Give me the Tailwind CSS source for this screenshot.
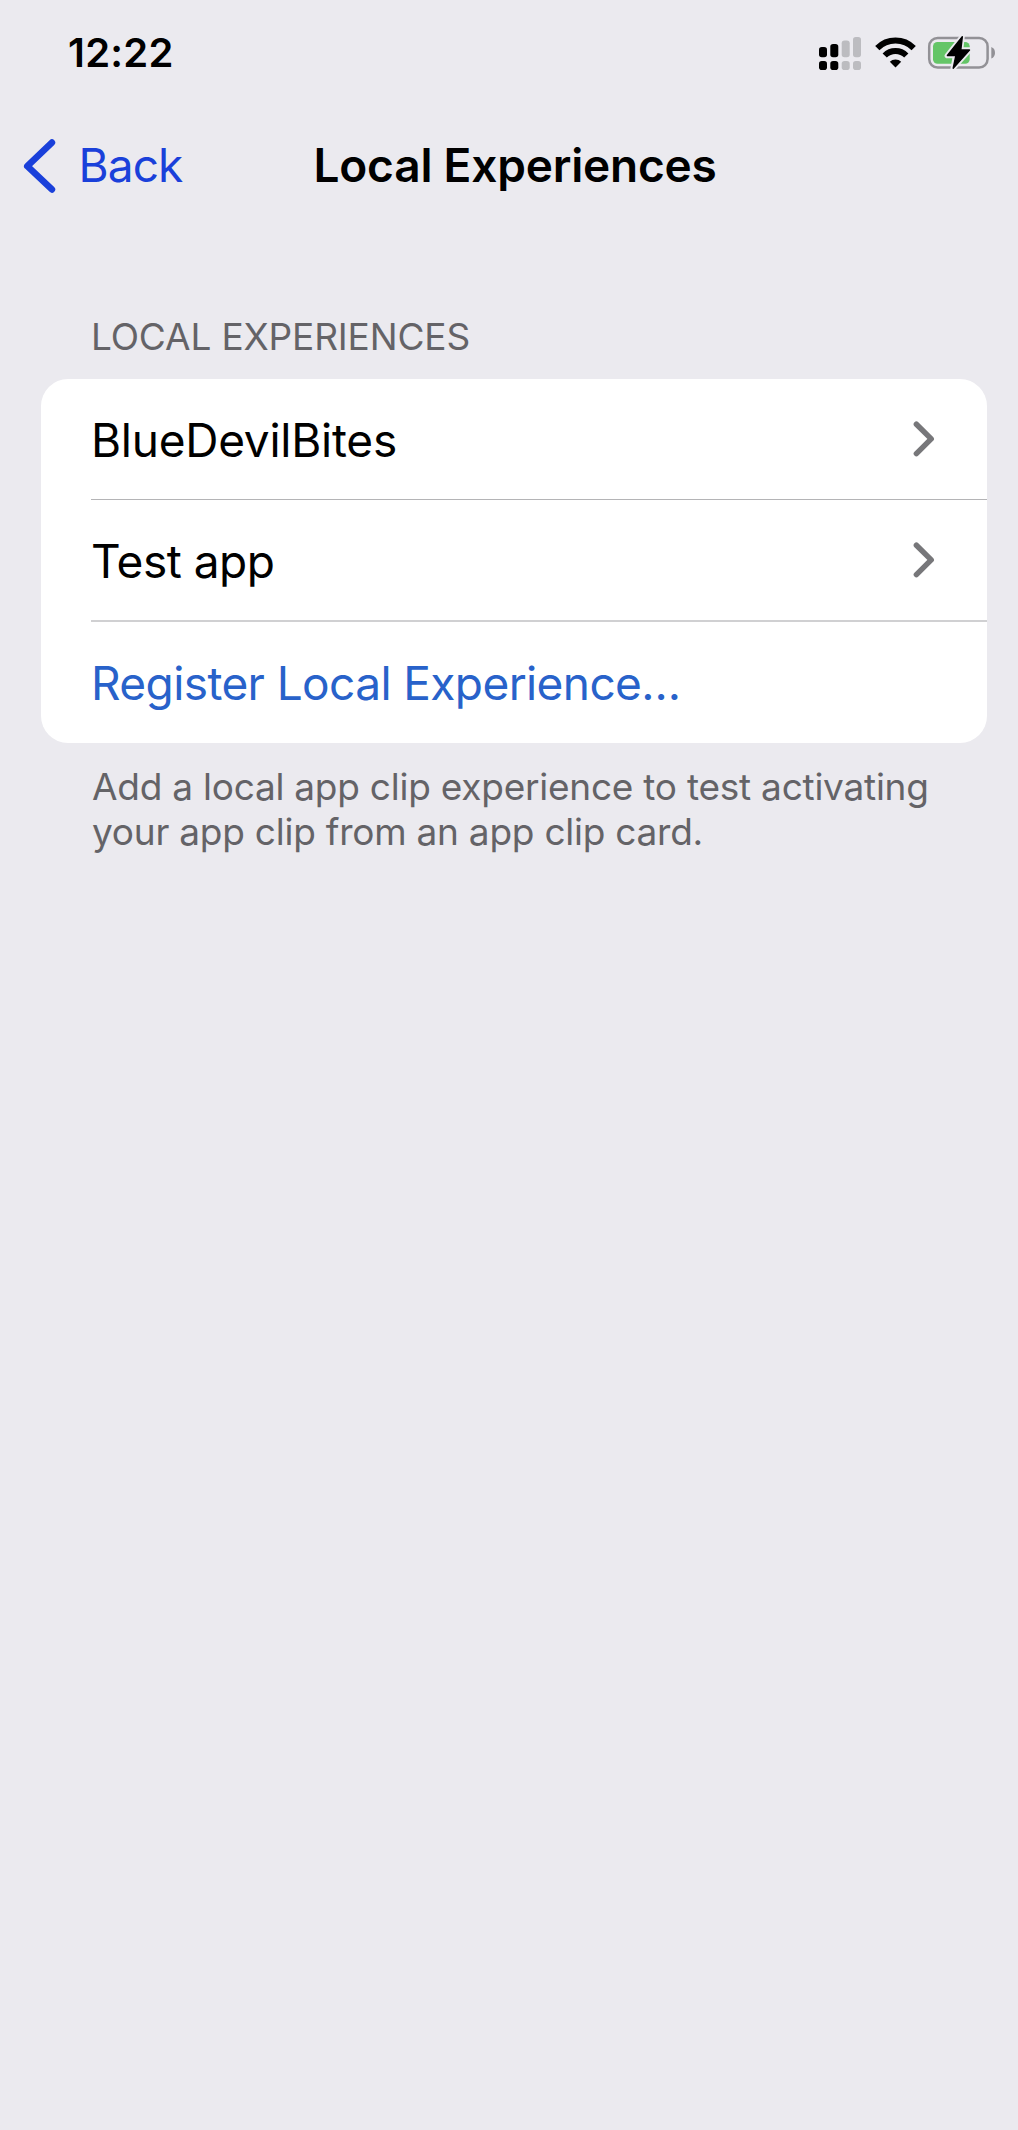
<!DOCTYPE html>
<html lang="en">
<head>
<meta charset="utf-8">
<title>Local Experiences</title>
<script src="https://cdn.jsdelivr.net/npm/@tailwindcss/browser@4"></script>
</head>
<body class="min-h-[2130px] bg-[#ebeaef] font-['Inter',sans-serif] text-black">
  <!-- Status bar -->
  <div class="flex h-[105px] items-center justify-between pl-[68px] pr-[18px]">
    <span class="text-[40px] font-semibold leading-[48px] tracking-[0.25px]">12:22</span>
    <svg class="h-[45px] w-[185px]" viewBox="815 30 185 45" fill="none">
      <g fill="#000">
        <rect x="819" y="47" width="8" height="10.3" rx="2.8"/>
        <rect x="830.3" y="44" width="8" height="13.3" rx="2.8"/>
        <rect x="819" y="61" width="8" height="9" rx="2.8"/>
        <rect x="830.3" y="61" width="8" height="9" rx="2.8"/>
      </g>
      <g fill="#bcbcc0">
        <rect x="841.7" y="40.5" width="8" height="16.8" rx="2.8"/>
        <rect x="853" y="37" width="8" height="20.3" rx="2.8"/>
        <rect x="841.7" y="61" width="8" height="9" rx="2.8"/>
        <rect x="853" y="61" width="8" height="9" rx="2.8"/>
      </g>
      <g stroke="#000" stroke-width="6">
        <path d="M877.3 48.2A25.6 25.6 0 0 1 913.7 48.2"/>
        <path d="M884.7 55.5A15.3 15.3 0 0 1 906.3 55.5"/>
      </g>
      <path d="M895.5 67.5L889.8 61.8A8 8 0 0 1 901.2 61.8Z" fill="#000"/>
      <rect x="929.2" y="38" width="58.4" height="29.6" rx="8.5" stroke="#929196" stroke-width="2.5"/>
      <rect x="933" y="42" width="36.7" height="21.7" rx="4.5" fill="#64c567"/>
      <path d="M991.3 47V58.5Q995 57 995 52.7T991.3 47Z" fill="#929196"/>
      <path d="M962.3 36.5L947 55.8H955.3L953 68.5L969.8 49.8H960.8Z" fill="#ebeaef" stroke="#ebeaef" stroke-width="5" stroke-linejoin="round"/>
      <path d="M962.3 36.8L947.4 55.5H955.9L953.2 68.2L969.5 50H960.8Z" fill="#000" stroke="#000" stroke-width="1.4" stroke-linejoin="round"/>
    </svg>
  </div>

  <!-- Navigation bar -->
  <header class="grid h-[121px] grid-cols-[313.5px_auto_1fr] items-center text-[46px] leading-[56px]">
    <a class="flex items-center gap-[21.5px] pl-[23px] text-[#1a40da]">
      <svg class="h-[56px] w-[34px]" viewBox="0 0 34 56" fill="none" stroke="currentColor" stroke-width="6.6" stroke-linecap="round" stroke-linejoin="round"><path d="M28.9 4.6L4.3 28.2L28.9 51.4"/></svg>
      <span class="pb-[2px] tracking-[-0.9px]">Back</span>
    </a>
    <h1 class="pb-[2px] font-semibold tracking-[-0.2px]">Local Experiences</h1>
  </header>

  <main class="pl-[41px] pr-[31px] pt-[88px]">
    <h2 class="mb-[19px] pl-[50px] text-[37px] leading-[46px] tracking-[-0.15px] text-[#646367]">LOCAL EXPERIENCES</h2>
    <div class="rounded-[27px] bg-white pl-[50px] text-[46px] leading-[56px]">
      <div class="flex h-[121px] items-center justify-between border-b border-[#b4b4b6] pr-[52px]">
        <span class="pt-px tracking-[-0.25px]">BlueDevilBites</span>
        <svg class="h-[36px] w-[22px]" viewBox="0 0 22 36" fill="none" stroke="#77777a" stroke-width="5.5" stroke-linecap="round" stroke-linejoin="round"><path d="M3.4 3.2L18.2 17.9L3.4 32.6"/></svg>
      </div>
      <div class="flex h-[122px] items-center justify-between border-b-2 border-[#d0d0d2] pr-[52px]">
        <span class="pt-[2px] tracking-[-0.5px]">Test app</span>
        <svg class="h-[36px] w-[22px]" viewBox="0 0 22 36" fill="none" stroke="#77777a" stroke-width="5.5" stroke-linecap="round" stroke-linejoin="round"><path d="M3.4 3.2L18.2 17.9L3.4 32.6"/></svg>
      </div>
      <div class="flex h-[121px] items-center text-[#2862ca]">
        <span class="tracking-[-0.6px]">Register Local Experience…</span>
      </div>
    </div>
    <p class="pl-[51px] pt-[20.5px] text-[37px] leading-[45.7px] tracking-[-0.24px] text-[#646367]">Add a local app clip experience to test activating<br>your app clip from an app clip card.</p>
  </main>
</body>
</html>
